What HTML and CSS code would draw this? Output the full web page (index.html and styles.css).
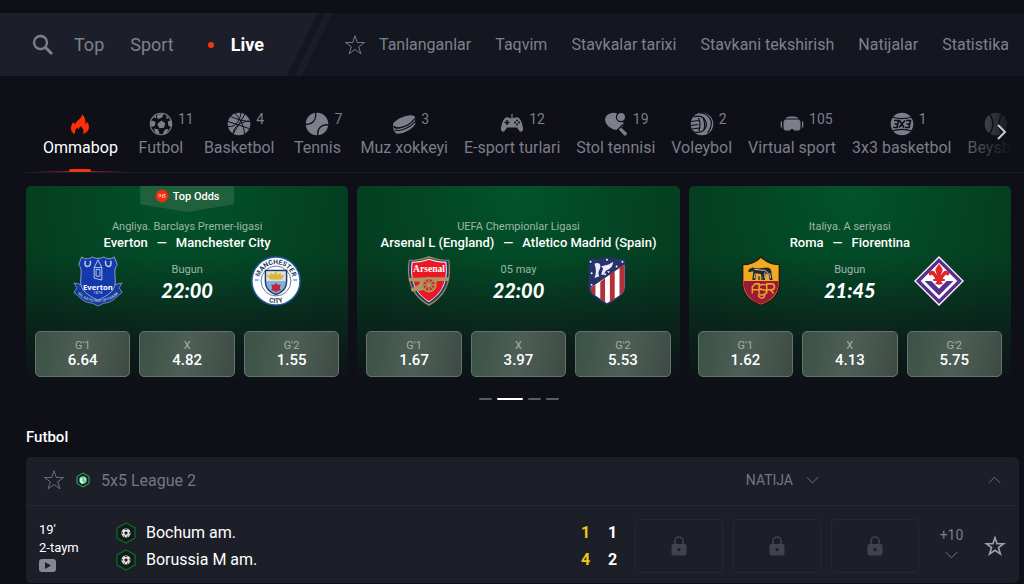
FILE: index.html
```html
<!DOCTYPE html>
<html lang="uz">

<head>
    <meta charset="UTF-8">
    <meta name="viewport" content="width=device-width, initial-scale=1.0">
    <title>Live</title>
    <link rel="stylesheet" href="styles.css">
</head>

<body>
    <svg class="sprite" aria-hidden="true">
        <symbol id="star" viewBox="0 0 24 24">
            <path d="M12 1.8l2.5 7.5h7.9l-6.4 4.7 2.4 7.6-6.4-4.7-6.4 4.7L8 14 1.6 9.3h7.9z" fill="none" stroke="currentColor" />
        </symbol>
        <symbol id="lock" viewBox="0 0 16 20">
            <path d="M4 9V5a4 4 0 0 1 8 0v4" fill="none" stroke="currentColor" stroke-width="1.6" />
            <path fill-rule="evenodd" d="M2.500 8h11a2 2 0 0 1 2 2v7.500a2 2 0 0 1-2 2h-11a2 2 0 0 1-2-2V10a2 2 0 0 1 2-2zM8 12a1.600 1.600 0 1 0 .01 0z" fill="currentColor" />
        </symbol>
        <symbol id="chevron" viewBox="0 0 14 8">
            <path d="M1 1l6 6 6-6" fill="none" stroke="currentColor" />
        </symbol>
        <symbol id="team" viewBox="0 0 22 22">
            <path d="M11 1l9 5v10l-9 5-9-5V6z" fill="#101b1c" stroke="#12691f" stroke-width="1.300" />
            <circle cx="11" cy="11" r="4.600" fill="#e4e6e6" />
            <path d="M11 9.300l1.700 1.200-.6 2H9.900l-.6-2zM9 6.900l4 0-2 1.100zM6.600 9.500l1.400.9-1 2.100zM15.400 9.500l-1.400.9 1 2.100zM8.300 13.500l1.500.3-.3 1.500zM13.700 13.500l-1.500.3.3 1.500z" fill="#15191c" />
        </symbol>
    </svg>

    <header class="header">
        <nav class="main-menu">
            <button class="search" aria-label="Qidirish">
                <svg width="22" height="22" viewBox="0 0 22 22"><circle cx="8.500" cy="8.500" r="6.500" fill="none" stroke="currentColor" stroke-width="2.300" /><path d="M13.500 13.500l6.500 6.500" stroke="currentColor" stroke-width="3" /></svg>
            </button>
            <a href="#">Top</a>
            <a href="#">Sport</a>
            <a href="#" class="live">Live</a>
        </nav>
        <span class="slash"></span>
        <nav class="sub-menu">
            <a href="#" class="favorites"><svg width="22" height="22"><use href="#star" /></svg>Tanlanganlar</a>
            <a href="#">Taqvim</a>
            <a href="#">Stavkalar tarixi</a>
            <a href="#">Stavkani tekshirish</a>
            <a href="#">Natijalar</a>
            <a href="#">Statistika</a>
        </nav>
    </header>

    <div class="sports">
        <nav class="sports-list">
            <a href="#" class="sport active">
                <span class="sport-icon"><svg width="24" height="24" viewBox="0 0 24 24"><path d="M14 2c.5 4-5.500 6.500-7 10-.8-.5-1.300-1.200-1.300-2C3.500 12 2.800 14.500 3 17c.2 2.500 1.500 4.200 4 5-.5-3 .5-5 2.700-6.500 0 1 .3 1.600 1 2.100.3-1.700 1.100-2.600 2.300-3.600.2 1.500 2.700 2.600 2.500 5 0 1-.2 2-.8 3 3.500-.8 6.300-3.300 6.300-7 0-2.200-.8-4-2.200-5.500 0 1.200-.5 2.200-1.600 2.700C18 8.500 17 4.500 14 2z" fill="#ff2e06" /></svg></span>
                <span>Ommabop</span>
            </a>
            <a href="#" class="sport">
                <span class="sport-icon"><svg width="24" height="24" viewBox="0 0 24 24"><circle cx="12" cy="12" r="10.700" fill="none" stroke="currentColor" stroke-width="1.100" /><path d="M12.500 8.500l3.800 2.700-1.200 4.600-4.800.4-2-4.200zM8.500 2.500l6-.5-1.500 3.500-4 1.500-1.500-2zM2.500 8.500l4 1.200-.5 3.800-3 1.500-1.500-2.500zM22 8l-3 1.500.2 4 3 1.500c.6-2.500.6-5-.2-7zM5 16.500l4 .8 1.500 3.700-1.500 1.300C7 21.500 5.500 19.500 5 16.500zM19.500 16.800l-3.500.7-2 3.500.5 1.500c2.500-.8 4.300-2.700 5-5.700zM4 5.500L7 3.500 7 6zM17.500 3.500l2.500 2.500-2.500 1z" fill="currentColor" /></svg><sup>11</sup></span>
                <span>Futbol</span>
            </a>
            <a href="#" class="sport">
                <span class="sport-icon"><svg width="24" height="24" viewBox="0 0 24 24"><circle cx="12" cy="12" r="11.300" fill="currentColor" /><path d="M18 2L6 22M1 9.500l21 7M8 1c5 6 9 12 9.500 21M4 4.500c6 3 13 5 20 5M1 14.500c7 1 12-5 13-14M6 22c1-8 7-12 16-13" fill="none" stroke="#0e0f17" /></svg><sup>4</sup></span>
                <span>Basketbol</span>
            </a>
            <a href="#" class="sport">
                <span class="sport-icon"><svg width="24" height="24" viewBox="0 0 24 24"><circle cx="12" cy="12" r="11.300" fill="currentColor" /><path d="M0 12c6.500 1.500 12-3.500 10.500-12M13 24c-1.500-7 3.500-12.500 11-11" fill="none" stroke="#0e0f17" stroke-width="1.300" /></svg><sup>7</sup></span>
                <span>Tennis</span>
            </a>
            <a href="#" class="sport">
                <span class="sport-icon"><svg width="24" height="24" viewBox="0 0 24 24"><path d="M1 12C3 7 18 1 22 4c2 1.500 1 4-1 6-4 4-14 8-18 5-1.500-.8-2.300-1.700-2-3z" fill="currentColor" /><path d="M1 12.500c.5 5 3 4.500 6.500 4C14 15.500 20 12 22.800 6l.5 6C20 18 10 22.500 4 21.500 2 19 .7 16 1 12.500z" fill="currentColor" /><path d="M2 14.500c5 3.500 17-1.500 20.500-8M3 18c6 2 16-3 20-8.500" fill="none" stroke="#0e0f17" stroke-width="1.200" /></svg><sup>3</sup></span>
                <span>Muz xokkeyi</span>
            </a>
            <a href="#" class="sport">
                <span class="sport-icon"><svg width="24" height="24" viewBox="0 0 24 24"><path d="M12 6V2" stroke="currentColor" stroke-width="1.300" /><path d="M6 5.500c2-.8 3 .8 6 .8s4-1.600 6-.8c3 1.200 5 8 5 11.500 0 3-2.500 3.500-4 1.500L17 15.500H7L5 18.500C3.500 20.500 1 20 1 17 1 13.500 3 6.700 6 5.500z" fill="currentColor" /><path d="M7 8v5M4.500 10.500h5" stroke="#0e0f17" stroke-width="1.500" /><g fill="#0e0f17"><circle cx="17" cy="8.500" r="1" /><circle cx="17" cy="12.500" r="1" /><circle cx="15" cy="10.500" r="1" /><circle cx="19" cy="10.500" r="1" /></g></svg><sup>12</sup></span>
                <span>E-sport turlari</span>
            </a>
            <a href="#" class="sport">
                <span class="sport-icon"><svg width="24" height="24" viewBox="0 0 24 24"><path d="M8 1c3-.6 6 .3 8 2.500 3 3.500 4.500 8.500 2.500 11L14.500 18C9 18.500 3 14.500 1.500 10 0 5.500 3 1.700 8 1z" fill="currentColor" /><path d="M16.500 15.500l6.500 6-2.200 2-6-6.500z" fill="currentColor" stroke="currentColor" /><circle cx="17" cy="5" r="4.600" fill="currentColor" stroke="#0e0f17" stroke-width="1.200" /><path d="M13 18.500l6-6" stroke="#0e0f17" stroke-width="1.200" /></svg><sup>19</sup></span>
                <span>Stol tennisi</span>
            </a>
            <a href="#" class="sport">
                <span class="sport-icon"><svg width="24" height="24" viewBox="0 0 24 24"><circle cx="12" cy="12" r="11.300" fill="currentColor" /><path d="M3.500 5c5-1.500 9-.5 11 2 3 4 2.500 9-1 11.500-3 2-7 2.500-10.500 1M1 9.500l8-1M.5 13.500l8-1M2 17l7-1M8.500 6c2 4 2 8 .5 13M13 5.500c2 5 2.500 9 .5 13M10 1c6 0 10 4 11.500 9 0 4-1 7-4 11" fill="none" stroke="#0e0f17" stroke-width="1.200" /></svg><sup>2</sup></span>
                <span>Voleybol</span>
            </a>
            <a href="#" class="sport">
                <span class="sport-icon"><svg width="24" height="24" viewBox="0 0 24 24"><path d="M5 7.500h14l1.500 2v7L19 18.500h-4.500L12 16.800l-2.500 1.700H5l-1.500-2v-7zM6 5.500C9 4 15 4 18 5.500v1H6zM.7 9.500H2v6H.7zM22 9.500h1.300v6H22z" fill="currentColor" /></svg><sup>105</sup></span>
                <span>Virtual sport</span>
            </a>
            <a href="#" class="sport">
                <span class="sport-icon"><svg width="24" height="24" viewBox="0 0 24 24"><circle cx="12" cy="12" r="11.300" fill="currentColor" /><path d="M2 5c6 2 14 2 20 0M2 19c6-2 14-2 20 0" fill="none" stroke="#0e0f17" stroke-width="1.200" /><path d="M4 8.500h4.500L7 15.500H3M4.500 12H7M9.500 8.500l4.500 7M15 8.500l-6 7M16 8.500h4.500L19 15.500h-4M16.500 12H19" fill="none" stroke="#0e0f17" stroke-width="1.700" /></svg><sup>1</sup></span>
                <span>3x3 basketbol</span>
            </a>
            <a href="#" class="sport">
                <span class="sport-icon"><svg width="24" height="24" viewBox="0 0 24 24"><circle cx="12" cy="12" r="11.300" fill="currentColor" /><path d="M5 1c5 7 5 15 0 22M19 1c-5 7-5 15 0 22" fill="none" stroke="#0e0f17" stroke-width="1.400" /></svg></span>
                <span>Beysbol</span>
            </a>
        </nav>
        <button class="next" aria-label="Keyingi">
            <svg width="10" height="16" viewBox="0 0 10 16"><path d="M1 1l7 7-7 7" fill="none" stroke="currentColor" stroke-width="2" /></svg>
        </button>
    </div>

    <main>
        <section class="cards">
            <article class="card">
                <div class="top-odds"><svg width="14" height="14" viewBox="0 0 14 14"><circle cx="7" cy="7" r="5.800" fill="#f32e0c" stroke="#f32e0c" stroke-width="1.400" stroke-dasharray="2 1" /><path d="M4.700 5.300a1 1.300 0 1 0 .1 0M8 5l-1 4M10.500 5.500H9L8.700 7c1.700-.4 1.900 1.900 0 1.600" fill="none" stroke="#fff" stroke-width=".7" /></svg>Top Odds</div>
                <p class="league">Angliya. Barclays Premer-ligasi</p>
                <h3>Everton<span>—</span>Manchester City</h3>
                <div class="fixture">
                    <svg class="crest" viewBox="0 0 54 54">
                        <path d="M2 29l9 2h32l9-2-3 5 3 5C46 43 42 50 33 50l-6 3-6-3C12 50 8 43 2 39l3-5z" fill="#153c9b" stroke="#86a4cf" stroke-width=".8" />
                        <path d="M10 2c4 3 8 2 11 0 3 2 9 2 12 0 3 2 7 3 11 0l3 8c-4 5-2 10-2 17 0 10-6 14-18 20C15 41 9 37 9 27c0-7 2-12-2-17z" fill="#1539ad" stroke="#a8bfdf" stroke-width=".8" />
                        <path d="M14 6c-3 8 7 8 5 0M35 6c-2 8 8 8 5 0" fill="none" stroke="#b8c9e8" stroke-width="1.600" />
                        <path d="M23 13l4-8 4 8v13l-8-2zM23 13h8M25 15h4v7h-4z" fill="none" stroke="#b8c9e8" />
                        <text x="27" y="36" class="everton-name">Everton</text>
                        <text x="27" y="41" class="everton-year">1878</text>
                        <path id="motto" d="M5 39c9 13 35 13 44 0" fill="none" />
                        <text class="everton-motto"><textPath href="#motto" startOffset="50%">NIL SATIS NISI OPTIMUM</textPath></text>
                    </svg>
                    <div class="when"><span>Bugun</span><time>22:00</time></div>
                    <svg class="crest" viewBox="0 0 54 54">
                        <circle cx="27" cy="27" r="25" fill="#fff" stroke="#235b9d" stroke-width="1.600" />
                        <path id="city-top" d="M9.500 27a17.500 17.500 0 0 1 35 0" fill="none" />
                        <path id="city-bottom" d="M4 27a23 23 0 0 0 46 0" fill="none" />
                        <text class="city-name"><textPath href="#city-top" startOffset="50%">MANCHESTER</textPath></text>
                        <text class="city-name"><textPath href="#city-bottom" startOffset="50%">CITY</textPath></text>
                        <circle cx="27" cy="27" r="15.500" fill="#fff" stroke="#537aac" />
                        <path d="M16 16h22v12c0 7-5 11-11 13-6-2-11-6-11-13z" fill="#7fb1dc" stroke="#23395d" stroke-width="1.500" />
                        <path d="M17 17h20v10H17z" fill="#d7e2e8" />
                        <path d="M21 25h12l2-4-4 1 1-3-4 2-1-4-2 4-4-2 1 3-4-1z" fill="#e2b52e" stroke="#e2b52e" />
                        <path d="M27 29l2 2 3 0-1 3 1 3h-3l-2 2-2-2h-3l1-3-1-3h3z" fill="#be263c" />
                        <path d="M5 26h4M45 26h4" stroke="#8eb9df" stroke-width="2" />
                    </svg>
                </div>
                <div class="odds">
                    <button><span>G'1</span>6.64</button>
                    <button><span>X</span>4.82</button>
                    <button><span>G'2</span>1.55</button>
                </div>
            </article>

            <article class="card">
                <p class="league">UEFA Chempionlar Ligasi</p>
                <h3>Arsenal L (England)<span>—</span>Atletico Madrid (Spain)</h3>
                <div class="fixture">
                    <svg class="crest" viewBox="0 0 54 54">
                        <path d="M6 5c7 0 14-1 21-4 7 3 14 4 21 4 3 19-1 37-21 48C7 42 3 24 6 5z" fill="#9c8250" />
                        <path d="M7 6c7 0 14-1 20-3 6 2 13 3 20 3 2 18-1 34-20 45C8 40 5 24 7 6z" fill="#163a78" />
                        <path d="M9 7c6 0 12-1 18-3 6 2 12 3 18 3 2 17-1 31-18 42C10 38 7 24 9 7z" fill="#f5f5f5" />
                        <path d="M10 8c6 0 12-1 17-3 5 2 11 3 17 3 2 16-1 30-17 40C11 38 8 24 10 8z" fill="#ec1722" />
                        <text x="27" y="18" class="arsenal-name">Arsenal</text>
                        <path d="M6 24l21-1h21l-1 4H36l-4 5-5 3-9 2-9 1-1-3 8-4 2-3-12-1z" fill="#af955f" />
                        <circle cx="27" cy="31" r="7" fill="#c8302c" stroke="#af955f" stroke-width="2" />
                        <path d="M27 24v14M20 31h14M22 26l10 10M32 26L22 36" stroke="#af955f" stroke-width="1.300" />
                        <circle cx="27" cy="31" r="2.500" fill="#af955f" />
                    </svg>
                    <div class="when"><span>05 may</span><time>22:00</time></div>
                    <svg class="crest" viewBox="0 0 54 54">
                        <path d="M8 4c8 1 13-1 19-2 6 1 11 3 19 2v30c0 7-9 12-19 18C17 46 8 41 8 34z" fill="#29326d" />
                        <path d="M10 34L45 10v24c0 6-8 10-18 16-9-6-17-10-17-16z" fill="#fff" />
                        <path d="M10 34l5-3v11c-3-2-5-4-5-8zM20 28l5-4v25l-5-3zM30 20l5-4v30l-5 3zM40 13l5-3v24c0 3-2 6-5 8z" fill="#b52f38" />
                        <path d="M14 9c4-2 7 0 6 4-1 4-3 5-1 9l-5 2c2-5 2-9 0-15zM21 12c4-2 8-1 12-5 1 4-3 8-7 9l-3 5-2-1 2-6M27 17h3l-1 2z" fill="#e9eef6" />
                        <g fill="#fff"><circle cx="10" cy="7" r="1" /><circle cx="27" cy="5" r="1" /><circle cx="43" cy="7" r="1" /><circle cx="37" cy="12" r="1" /><circle cx="11" cy="19" r="1" /><circle cx="11" cy="31" r="1" /><circle cx="25" cy="20" r="1" /></g>
                    </svg>
                </div>
                <div class="odds">
                    <button><span>G'1</span>1.67</button>
                    <button><span>X</span>3.97</button>
                    <button><span>G'2</span>5.53</button>
                </div>
            </article>

            <article class="card">
                <p class="league">Italiya. A seriyasi</p>
                <h3>Roma<span>—</span>Fiorentina</h3>
                <div class="fixture">
                    <svg class="crest" viewBox="0 0 54 54">
                        <path d="M27 2c5 5 11 8 19 8v19c0 12-8 20-19 23C16 49 8 41 8 29V10c8 0 14-3 19-8z" fill="#efac23" stroke="#30150e" stroke-width="1.400" />
                        <path d="M9 27h36v2c0 11-8 19-18 22C17 48 9 40 9 29z" fill="#991b38" />
                        <path d="M14 15l4-2 5 1 10-1c4 0 5 3 5 7l1 6h-3l-1-6-3-1-1 7h-3l-1-6-5-1-1 7h-3l1-9-5 1z" fill="#252827" />
                        <path d="M20 15l11 1 4 3M21 19l-1 5M31 18v6M36 19l1 5" fill="none" stroke="#c3c7c5" />
                        <path d="M25 26v-4M28 26v-4" stroke="#555" stroke-width="2" />
                        <path d="M18 40v-7l3-3h4v10M18 36h7M33 40V30h5c4 0 4 6 0 6h-5M37 36l3 4M32 31c-9-2-9 5-3 5s5 7-5 5" fill="none" stroke="#eaa126" stroke-width="1.600" />
                        <path d="M24 42c3 5 9 2 6-2" fill="none" stroke="#eaa126" stroke-width="1.600" />
                    </svg>
                    <div class="when"><span>Bugun</span><time>21:45</time></div>
                    <svg class="crest" viewBox="0 0 54 54">
                        <path d="M27 1l26 26-26 26L1 27z" fill="#fff" stroke="#877aa8" stroke-width="1" />
                        <path d="M27 3l24 24-24 24L3 27z" fill="#563087" />
                        <path d="M27 8l19 19-19 19L8 27z" fill="#fff" />
                        <path d="M12 27h7l8 8 8-8h7L27 42z" fill="#533091" />
                        <path d="M27 9l4 6-2 6 3-4c4-2 8 2 4 5 0-3-4-1-5 3h2v2h-4l2 3-4 1-4-1 2-3h-4v-2h2c-1-4-5-6-5-3-4-3 0-7 4-5l3 4-2-6z" fill="#df2628" />
                    </svg>
                </div>
                <div class="odds">
                    <button><span>G'1</span>1.62</button>
                    <button><span>X</span>4.13</button>
                    <button><span>G'2</span>5.75</button>
                </div>
            </article>
        </section>

        <div class="pager">
            <button aria-label="1"></button>
            <button aria-label="2" class="current"></button>
            <button aria-label="3"></button>
            <button aria-label="4"></button>
        </div>

        <h2>Futbol</h2>

        <section class="panel">
            <div class="panel-head">
                <button aria-label="Tanlanganlarga qo'shish"><svg width="22" height="22"><use href="#star" /></svg></button>
                <svg class="league-icon" width="16" height="16" viewBox="0 0 16 16"><path d="M8 1l6 3.500v7L8 15l-6-3.500v-7z" fill="#10211f" stroke="#3fae67" /><circle cx="8" cy="8" r="3.800" fill="#6ed395" /><path d="M5 7c2-3 3 0 2 1s2 2 1 4c-2 0-3-2-3-5zM9 5l2 2-1 1z" fill="#d9f7ef" /></svg>
                <span class="league-name">5x5 League 2</span>
                <button class="market">NATIJA<svg width="13" height="8"><use href="#chevron" /></svg></button>
                <button class="collapse" aria-label="Yig'ish"><svg width="13" height="8"><use href="#chevron" /></svg></button>
            </div>
            <div class="match">
                <div class="clock">
                    <span>19'</span>
                    <span>2-taym</span>
                    <svg width="17" height="13" viewBox="0 0 17 13"><rect width="17" height="13" rx="3" fill="#858791" /><path d="M6 3l6 3.500L6 10z" fill="#1c1e28" /></svg>
                </div>
                <div class="teams">
                    <a href="#"><svg width="22" height="22"><use href="#team" /></svg>Bochum am.</a>
                    <a href="#"><svg width="22" height="22"><use href="#team" /></svg>Borussia M am.</a>
                </div>
                <div class="score">
                    <b class="total">1</b><b>1</b>
                    <b class="total">4</b><b>2</b>
                </div>
                <div class="bets">
                    <button disabled aria-label="G'1"><svg width="16" height="20"><use href="#lock" /></svg></button>
                    <button disabled aria-label="X"><svg width="16" height="20"><use href="#lock" /></svg></button>
                    <button disabled aria-label="G'2"><svg width="16" height="20"><use href="#lock" /></svg></button>
                </div>
                <button class="more">+10<svg width="13" height="8"><use href="#chevron" /></svg></button>
                <button class="fav" aria-label="Tanlanganlarga qo'shish"><svg width="22" height="22" viewBox="0 0 24 24"><path d="M12 3l2.300 6.500h7L15.800 13.800l2.100 6.900L12 16.600l-5.900 4.100 2.100-6.900L2.700 9.500h7z" fill="none" stroke="currentColor" stroke-width="1.800" /></svg></button>
            </div>
        </section>
    </main>
</body>

</html>
```

FILE: styles.css
```css
* {
    box-sizing: border-box;
}

body {
    margin: 0;
    padding-top: 13px;
    background: #0e0f17;
    color: #fff;
    font-family: Roboto, sans-serif;
    font-size: 16px;
    overflow: hidden;
}

a {
    color: inherit;
    text-decoration: none;
}

button {
    padding: 0;
    border: none;
    background: none;
    color: inherit;
    font: inherit;
    cursor: pointer;
}

svg {
    display: block;
    flex-shrink: 0;
}

.sprite {
    position: absolute;
    width: 0;
    height: 0;
}

/* header */
.header {
    display: flex;
    height: 63px;
    background: #14171f;
    color: #7e818b;
    white-space: nowrap;
    overflow: hidden;
}

.main-menu {
    display: flex;
    align-items: center;
    flex-shrink: 0;
    gap: 26px;
    padding: 0 54px 0 32px;
    background: #1c1f29;
    font-size: 18px;
    clip-path: polygon(0 0, 100% 0, calc(100% - 31px) 100%, 0 100%);
}

.search {
    margin-right: -6px;
}

.live {
    display: flex;
    align-items: center;
    gap: 17px;
    margin-left: 8px;
    color: #fff;
    font-weight: 700;
}

.live::before {
    content: "";
    width: 6px;
    height: 6px;
    border-radius: 50%;
    background: #f13a14;
}

.slash {
    flex-shrink: 0;
    width: 7px;
    margin-left: -8px;
    background: #1a1d27;
    transform: skewX(-26deg);
}

.sub-menu {
    flex: 1;
    display: flex;
    align-items: center;
    justify-content: space-between;
    gap: 12px;
    padding: 0 15px 0 27px;
}

.favorites {
    display: flex;
    align-items: center;
    gap: 13px;
}

/* sports */
.sports {
    position: relative;
    margin-left: 25px;
}

.sports-list {
    display: flex;
    padding: 36px 0 0 10px;
    border-bottom: 1px solid #1c1d26;
    overflow: hidden;
}

.sport {
    position: relative;
    display: flex;
    flex-direction: column;
    align-items: center;
    flex-shrink: 0;
    min-width: 70px;
    padding: 0 8px 13px;
    color: #7c7e89;
    line-height: 23px;
    white-space: nowrap;
}

.sport.active {
    color: #fff;
}

.sport.active::before,
.sport.active::after {
    content: "";
    position: absolute;
    bottom: 0;
    left: 0;
    right: 0;
    height: 1px;
    background: linear-gradient(90deg, transparent, #b82b14, transparent);
}

.sport.active::after {
    left: 50%;
    right: auto;
    width: 22px;
    height: 3px;
    margin-left: -11px;
    border-radius: 2px;
    background: #f53211;
}

.sport-icon {
    position: relative;
}

.sport-icon sup {
    position: absolute;
    left: 100%;
    top: 0;
    margin-left: 5px;
    font-size: 14px;
    line-height: 14px;
}

.next {
    position: absolute;
    right: 0;
    top: 0;
    bottom: 1px;
    width: 72px;
    padding: 16px 0 0 45px;
    background: linear-gradient(90deg, transparent, #0e0f17 85%);
    color: #c9cad0;
}

/* cards */
.cards {
    display: grid;
    grid-template-columns: repeat(3, 1fr);
    gap: 9px;
    margin: 13px 13px 0 26px;
}

.card {
    position: relative;
    padding: 34px 9px 9px;
    border-radius: 5px;
    background: linear-gradient(transparent 35%, #0e0f17 100%), radial-gradient(ellipse at 50% 0, #02532c, #053c20 75%);
    text-align: center;
}

.top-odds {
    position: absolute;
    top: 0;
    left: 50%;
    display: flex;
    justify-content: center;
    gap: 4px;
    width: 94px;
    height: 26px;
    margin-left: -47px;
    padding-top: 3px;
    background: #21603d;
    font-size: 11px;
    font-weight: 500;
    line-height: 15px;
    clip-path: polygon(0 0, 100% 0, 100% 70%, 50% 100%, 0 70%);
}

.league {
    margin: 0;
    color: #9db6a8;
    font-size: 11px;
    line-height: 14px;
}

.card h3 {
    display: flex;
    justify-content: center;
    gap: 9px;
    margin: 0;
    font-size: 13px;
    font-weight: 500;
    line-height: 18px;
    white-space: nowrap;
}

.fixture {
    display: grid;
    grid-template-columns: 52px 126px 52px;
    justify-content: center;
    margin-top: 3px;
}

.crest {
    width: 52px;
    height: 52px;
}

.when {
    display: flex;
    flex-direction: column;
    gap: 1px;
    padding-top: 8px;
    color: #9db6a8;
    font-size: 11px;
    line-height: 14px;
}

.when time {
    color: #fff;
    font-family: Lato, sans-serif;
    font-size: 20px;
    font-style: italic;
    font-weight: 900;
    line-height: 24px;
}

.everton-name {
    fill: #fff;
    font: 700 8px "Open Sans", sans-serif;
    text-anchor: middle;
}

.everton-year,
.everton-motto {
    fill: #9db5dd;
    font: 700 4px Roboto, sans-serif;
    text-anchor: middle;
}

.city-name {
    fill: #24365e;
    font: 700 7px Roboto, sans-serif;
    text-anchor: middle;
}

.arsenal-name {
    fill: #fff;
    font: 700 10px "Liberation Serif", serif;
    text-anchor: middle;
}

.odds {
    display: grid;
    grid-template-columns: repeat(3, 1fr);
    gap: 9px;
    margin-top: 24px;
}

.odds button {
    display: flex;
    flex-direction: column;
    align-items: center;
    height: 46px;
    padding-top: 7px;
    border: 1px solid #64746b;
    border-radius: 5px;
    background: linear-gradient(100deg, #3a5245, #4e5e56 50%, #3d4b44);
    font-size: 15px;
    font-weight: 500;
    line-height: 17px;
}

.odds span {
    color: #a0afa7;
    font-size: 11px;
    font-weight: 400;
    line-height: 13px;
}

.pager {
    display: flex;
    justify-content: center;
    gap: 5px;
    margin: 12px 13px 0 26px;
}

.pager button {
    width: 13px;
    height: 2px;
    border-radius: 1px;
    background: #5b5c64;
}

.pager .current {
    width: 26px;
    background: #fff;
}

h2 {
    margin: 26px 0 0 26px;
    font-size: 15px;
    font-weight: 500;
    line-height: 22px;
}

/* match list */
.panel {
    margin: 9px 5px 0 26px;
    border-radius: 5px;
    background: #1c1e28;
}

.panel-head {
    display: flex;
    align-items: center;
    height: 49px;
    padding: 0 18px 2px 17px;
    border-bottom: 1px solid #252833;
    color: #747782;
}

.league-icon {
    margin: 0 10px;
}

.league-name {
    flex: 1;
}

.market {
    display: flex;
    align-items: center;
    gap: 13px;
    margin-right: 169px;
    font-size: 14px;
}

.collapse svg {
    transform: rotate(180deg);
}

.match {
    display: flex;
    align-items: center;
    padding: 13px 13px 10px;
}

.clock {
    display: flex;
    flex-direction: column;
    width: 76px;
    font-size: 13px;
    line-height: 18px;
}

.clock svg {
    margin-top: 2px;
}

.teams {
    flex: 1;
}

.teams a {
    display: flex;
    align-items: center;
    gap: 9px;
    height: 27px;
}

.score {
    display: grid;
    grid-template-columns: 27px 27px;
    line-height: 27px;
    text-align: center;
}

.score b {
    font-weight: 700;
}

.score .total {
    color: #f5c51c;
}

.bets {
    display: flex;
    gap: 10px;
    margin-left: 9px;
}

.bets button {
    display: flex;
    align-items: center;
    justify-content: center;
    width: 88px;
    height: 54px;
    border: 1px solid #252731;
    border-radius: 4px;
    color: #40424d;
}

.more {
    display: flex;
    flex-direction: column;
    align-items: center;
    gap: 8px;
    width: 65px;
    padding-bottom: 6px;
    color: #7c7e89;
    font-size: 14px;
}

.fav {
    color: #9fa1a9;
}
```
